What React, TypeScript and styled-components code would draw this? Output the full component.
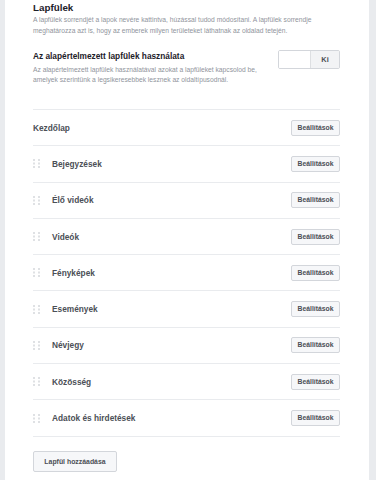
import React from "react";
import styled, { createGlobalStyle } from "styled-components";

const Global = createGlobalStyle`
  html, body { margin: 0; padding: 0; background: #e9ebee; }
  body { font-family: "Liberation Sans", Arial, sans-serif; }
`;

const Page = styled.div`
  display: flex;
  padding: 0 7px 0 5px;
  min-height: 480px;
  box-sizing: border-box;
`;

const Panel = styled.div`
  flex: 1;
  min-width: 0;
  background: #fff;
  padding: 2px 29px 0 28px;
  min-height: 480px;
`;

const Title = styled.div`
  font-size: 9.8px;
  font-weight: bold;
  color: #1d2129;
  line-height: 12px;
`;

const Desc = styled.div<{ $lh?: number }>`
  font-size: 6.7px;
  color: #90949c;
  line-height: ${(p) => p.$lh ?? 11}px;
  white-space: nowrap;
`;

const DefaultRow = styled.div`
  display: flex;
  align-items: flex-start;
  justify-content: space-between;
  margin-top: 15px;
  padding-bottom: 24px;
  border-bottom: 1px solid #e9ebee;
`;

const DefaultText = styled.div`
  flex: 0 1 240px;
  min-width: 0;
`;

const SubTitle = styled.div`
  font-size: 8.3px;
  font-weight: bold;
  color: #1d2129;
  line-height: 11px;
  margin-bottom: 3px;
`;

const Toggle = styled.div`
  display: flex;
  flex: 0 0 auto;
  margin-top: -1px;
  border: 1px solid #d3d6db;
  border-radius: 2px;
  height: 17px;
  overflow: hidden;
`;

const ToggleBlank = styled.div`
  width: 31px;
  background: #fff;
  border-right: 1px solid #dddfe2;
`;

const ToggleOn = styled.div`
  width: 28px;
  background: #f2f3f5;
  color: #4b4f56;
  font-size: 7.4px;
  font-weight: bold;
  display: flex;
  align-items: center;
  justify-content: center;
`;

const List = styled.div`
  display: flex;
  flex-direction: column;
`;

const Row = styled.div`
  display: flex;
  align-items: center;
  height: 35.3px;
  border-bottom: 1px solid #e9ebee;
`;

const Handle = styled.div<{ $show: boolean }>`
  width: 19px;
  flex: 0 0 auto;
  display: ${(p) => (p.$show ? "flex" : "none")};
  align-items: center;
`;

const Label = styled.div`
  flex: 1;
  font-size: 8.3px;
  font-weight: bold;
  color: #4b4f56;
`;

const SmallButton = styled.button`
  font-family: inherit;
  font-size: 6.8px;
  font-weight: bold;
  color: #4b4f56;
  background: #f6f7f9;
  border: 1px solid #d3d6db;
  border-radius: 2px;
  height: 16px;
  width: 49px;
  padding: 0;
  line-height: 14px;
`;

const AddButton = styled.button`
  font-family: inherit;
  font-size: 6.9px;
  font-weight: bold;
  color: #4b4f56;
  background: #f6f7f9;
  border: 1px solid #d3d6db;
  border-radius: 2px;
  height: 21px;
  width: 84px;
  padding: 0;
  margin-top: 14px;
`;

const Dots = () => (
  <svg width="7" height="9" viewBox="0 0 7 9">
    {[0, 3.5, 7].map((y) =>
      [0, 5].map((x) => (
        <rect key={`${x}-${y}`} x={x} y={y} width="2" height="2" fill="#dfe1e4" />
      ))
    )}
  </svg>
);

const tabs = [
  "Bejegyzések",
  "Élő videók",
  "Videók",
  "Fényképek",
  "Események",
  "Névjegy",
  "Közösség",
  "Adatok és hirdetések",
];

export default function App() {
  return (
    <>
      <Global />
      <Page>
        <Panel>
          <Title>Lapfülek</Title>
          <Desc>
            A lapfülek sorrendjét a lapok nevére kattintva, húzással tudod módosítani. A lapfülek sorrendje
            <br />
            meghatározza azt is, hogy az emberek milyen területeket láthatnak az oldalad tetején.
          </Desc>
          <DefaultRow>
            <DefaultText>
              <SubTitle>Az alapértelmezett lapfülek használata</SubTitle>
              <Desc $lh={10}>
                Az alapértelmezett lapfülek használatával azokat a lapfüleket kapcsolod be,
                <br />
                amelyek szerintünk a legsikeresebbek lesznek az oldaltípusodnál.
              </Desc>
            </DefaultText>
            <Toggle>
              <ToggleBlank />
              <ToggleOn>Ki</ToggleOn>
            </Toggle>
          </DefaultRow>
          <List>
            <Row>
              <Handle $show={false} />
              <Label>Kezdőlap</Label>
              <SmallButton>Beállítások</SmallButton>
            </Row>
            {tabs.map((t) => (
              <Row key={t}>
                <Handle $show={true}>
                  <Dots />
                </Handle>
                <Label>{t}</Label>
                <SmallButton>Beállítások</SmallButton>
              </Row>
            ))}
          </List>
          <AddButton>Lapfül hozzáadása</AddButton>
        </Panel>
      </Page>
    </>
  );
}
